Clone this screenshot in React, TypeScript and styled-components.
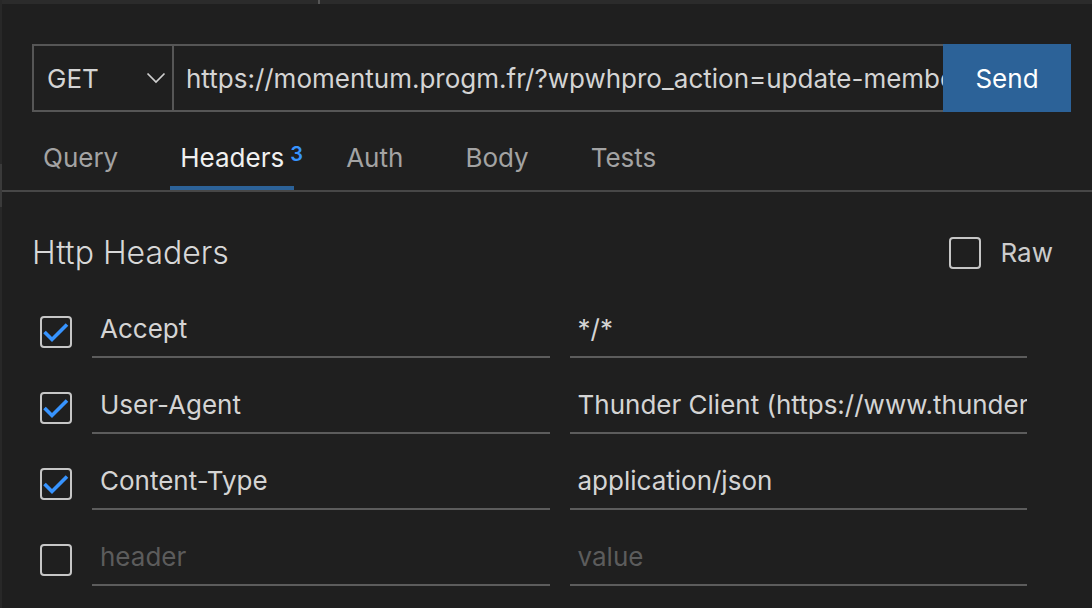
import React from "react";
import styled, { createGlobalStyle } from "styled-components";

const GlobalStyle = createGlobalStyle`
  html, body { margin: 0; padding: 0; background: #1f1f1f; }
  body { font-family: Inter, "Noto Sans", "Liberation Sans", sans-serif; -webkit-font-smoothing: antialiased; }
  * { box-sizing: border-box; }
`;

const Page = styled.div`
  display: flex;
  width: 1092px;
  height: 608px;
  overflow: hidden;
  background: #1f1f1f;
`;

const Rail = styled.div`
  width: 2px;
  flex: none;
  background: #282828;
  display: flex;
  flex-direction: column;
`;

const RailThumb = styled.div`
  margin-top: 164px;
  height: 43px;
  background: #3a3a3a;
`;

const Main = styled.div`
  flex: 1;
  display: flex;
  flex-direction: column;
  min-width: 0;
`;

const TopStrip = styled.div`
  height: 4px;
  background: #2b2b2b;
  display: flex;
`;

const TopSegment = styled.div`
  width: 318px;
  border-right: 2px solid #565656;
`;

const UrlSection = styled.div`
  padding: 40px 21px 0 30px;
`;

const UrlBar = styled.div`
  display: flex;
  height: 68px;
`;

const MethodSelect = styled.div`
  width: 142px;
  flex: none;
  border: 2px solid #565656;
  display: flex;
  align-items: center;
  justify-content: space-between;
  padding: 0 6px 0 13px;
  font-size: 26px;
  color: #d4d4d4;
`;

const UrlField = styled.div`
  flex: 1;
  min-width: 0;
  border-top: 2px solid #565656;
  border-bottom: 2px solid #565656;
  display: flex;
  align-items: center;
  padding-left: 12px;
  font-size: 26px;
  color: #d4d4d4;
  white-space: nowrap;
  overflow: hidden;
`;

const UrlText = styled.span`
  display: block;
  overflow: hidden;
  min-width: 0;
`;

const SendButton = styled.div`
  width: 128px;
  flex: none;
  background: #2c6298;
  color: #ffffff;
  font-size: 26px;
  display: flex;
  align-items: center;
  justify-content: center;
`;

const TabBar = styled.div`
  margin-top: 30px;
  padding-left: 31px;
  display: flex;
  gap: 42px;
  border-bottom: 2px solid #474747;
`;

const Tab = styled.div<{ $active?: boolean }>`
  position: relative;
  padding: 0 10px 12px;
  line-height: 32px;
  font-size: 26px;
  color: ${(p) => (p.$active ? "#f0f0f0" : "#a3a3a3")};
  border-bottom: 4px solid ${(p) => (p.$active ? "#2c6298" : "transparent")};
`;

const Badge = styled.span`
  position: absolute;
  left: calc(100% - 4px);
  top: 2px;
  font-size: 20px;
  line-height: 20px;
  font-weight: 600;
  color: #3794ff;
`;

const Panel = styled.div`
  padding: 41px 21px 0 30px;
`;

const SectionHeader = styled.div`
  display: flex;
  align-items: center;
  justify-content: space-between;
  height: 40px;
  padding-right: 18px;
`;

const Title = styled.div`
  font-size: 32px;
  line-height: 40px;
  font-weight: 300;
  color: #d8d8d8;
`;

const RawToggle = styled.div`
  display: flex;
  align-items: center;
  gap: 20px;
  font-size: 26px;
  line-height: 32px;
  color: #cccccc;
`;

const Rows = styled.div`
  margin-top: 9px;
`;

const Row = styled.div`
  display: flex;
  align-items: flex-end;
  height: 76px;
  padding: 0 44px 0 8px;
  gap: 20px;
`;

const CheckBox = styled.div<{ $inRow?: boolean }>`
  width: 32px;
  height: 32px;
  flex: none;
  border: 2px solid #c6c6c6;
  border-radius: 4px;
  margin-bottom: ${(p) => (p.$inRow ? "10px" : "0")};
  position: relative;
  svg { position: absolute; left: -2px; top: -2px; }
`;

const Field = styled.div<{ $placeholder?: boolean }>`
  flex: 1;
  min-width: 0;
  border-bottom: 2px solid #5c5c5c;
  padding: 0 0 11px 8px;
  font-size: 26px;
  line-height: 32px;
  color: ${(p) => (p.$placeholder ? "#5c5c5c" : "#d4d4d4")};
  white-space: nowrap;
  overflow: hidden;
`;

const Chevron = () => (
  <svg width="20" height="12" viewBox="0 0 20 12" fill="none">
    <path d="M1.5 1.5 L10 10 L18.5 1.5" stroke="#cfcfcf" strokeWidth="1.7" />
  </svg>
);

const Check = ({ checked, inRow }: { checked?: boolean; inRow?: boolean }) => (
  <CheckBox $inRow={inRow}>
    {checked && (
      <svg width="32" height="32" viewBox="0 0 32 32" fill="none">
        <path d="M4.5 16 L12 23.5 L27 8.5" stroke="#3794ff" strokeWidth="3.6" />
      </svg>
    )}
  </CheckBox>
);

const headers = [
  { key: "Accept", value: "*/*", checked: true },
  { key: "User-Agent", value: "Thunder Client (https://www.thunderclient.com)", checked: true },
  { key: "Content-Type", value: "application/json", checked: true },
];

export default function App() {
  return (
    <>
      <GlobalStyle />
      <Page>
        <Rail>
          <RailThumb />
        </Rail>
        <Main>
          <TopStrip>
            <TopSegment />
          </TopStrip>
          <UrlSection>
            <UrlBar>
              <MethodSelect>
                <span>GET</span>
                <Chevron />
              </MethodSelect>
              <UrlField>
                <UrlText>https://momentum.progm.fr/?wpwhpro_action=update-member</UrlText>
              </UrlField>
              <SendButton>Send</SendButton>
            </UrlBar>
          </UrlSection>
          <TabBar>
            <Tab>Query</Tab>
            <Tab $active>
              Headers
              <Badge>3</Badge>
            </Tab>
            <Tab>Auth</Tab>
            <Tab>Body</Tab>
            <Tab>Tests</Tab>
          </TabBar>
          <Panel>
            <SectionHeader>
              <Title>Http Headers</Title>
              <RawToggle>
                <Check />
                <span>Raw</span>
              </RawToggle>
            </SectionHeader>
            <Rows>
              {headers.map((h) => (
                <Row key={h.key}>
                  <Check checked={h.checked} inRow />
                  <Field>{h.key}</Field>
                  <Field>{h.value}</Field>
                </Row>
              ))}
              <Row>
                <Check inRow />
                <Field $placeholder>header</Field>
                <Field $placeholder>value</Field>
              </Row>
            </Rows>
          </Panel>
        </Main>
      </Page>
    </>
  );
}
